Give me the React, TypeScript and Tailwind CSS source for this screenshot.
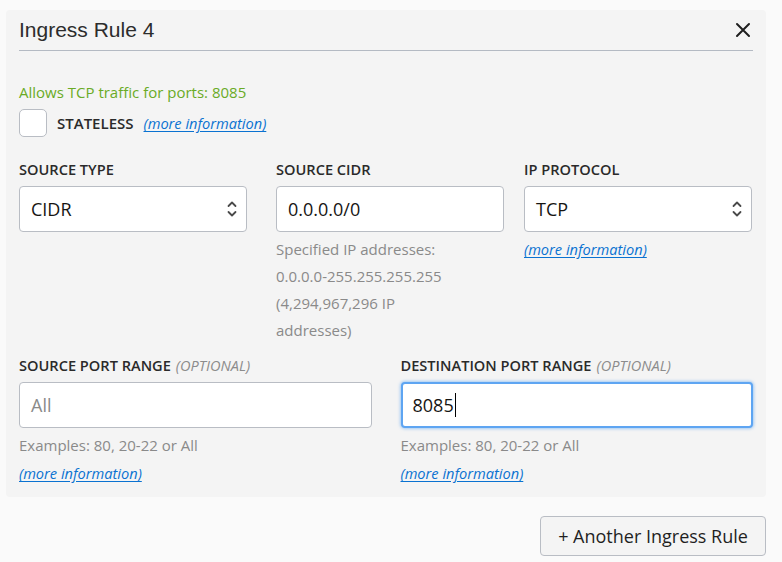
import React from "react";

const sans = { fontFamily: '"Open Sans", "Liberation Sans", sans-serif' };
const helv = { fontFamily: '"Liberation Sans", Arial, sans-serif' };

function MoreInfo() {
  return (
    <a className="text-[14.6px] italic text-[#0a72d1] underline underline-offset-2" style={sans}>
      (more information)
    </a>
  );
}

function Chevrons() {
  return (
    <svg width="10" height="18" viewBox="0 0 10 18" fill="none" stroke="#4a4a4a" strokeWidth="1.8" strokeLinecap="round" strokeLinejoin="round">
      <path d="M1.5 6 L5 2.5 L8.5 6" />
      <path d="M1.5 12 L5 15.5 L8.5 12" />
    </svg>
  );
}

function Label({ text, optional }: { text: string; optional?: boolean }) {
  return (
    <div className="h-[20px] text-[14.6px] leading-[19px] font-semibold text-[#2a2a2a]" style={sans}>
      {text}
      {optional && <span className="ml-[5px] font-normal italic text-[#8c8c8c]">(OPTIONAL)</span>}
    </div>
  );
}

function Select({ value }: { value: string }) {
  return (
    <div className="mt-[6px] h-[46px] flex items-center justify-between rounded-[4px] border border-[#b9bdc4] bg-white pl-[11px] pr-[9px] text-[18px] text-[#161513]" style={sans}>
      <span>{value}</span>
      <Chevrons />
    </div>
  );
}

function TextBox({ value, placeholder }: { value?: string; placeholder?: string }) {
  return (
    <div className="mt-[6px] h-[46px] flex items-center rounded-[4px] border border-[#b9bdc4] bg-white pl-[11px] text-[18px]" style={sans}>
      {value ? <span className="text-[#161513]">{value}</span> : <span className="text-[#8a8a8a]">{placeholder}</span>}
    </div>
  );
}

function Help({ children }: { children: React.ReactNode }) {
  return (
    <div className="text-[15px] leading-[27px] text-[#8a8a8a]" style={sans}>
      {children}
    </div>
  );
}

export default function App() {
  return (
    <div className="w-[782px] h-[562px] bg-[#fafafa] pl-[6px] pt-[10px] overflow-hidden">
      <div className="w-[760px] rounded-[4px] bg-[#f4f4f4] px-[13px] pb-[10px]">
        <div className="h-[41px] flex items-center justify-between border-b border-[#b4bac3]">
          <span className="text-[21px] text-[#2c2c2c]" style={helv}>Ingress Rule 4</span>
          <svg width="16" height="16" viewBox="0 0 16 16" className="mr-[2px]" stroke="#1f1f1f" strokeWidth="2" strokeLinecap="round">
            <path d="M2 2 L14 14 M14 2 L2 14" />
          </svg>
        </div>

        <div className="mt-[31px] text-[15px] leading-[20px] text-[#6aab26]" style={sans}>
          Allows TCP traffic for ports: 8085
        </div>

        <div className="mt-[7px] flex items-center">
          <div className="w-[28px] h-[28px] rounded-[5px] border border-[#b9bdc4] bg-white" />
          <span className="ml-[10px] text-[15px] font-semibold text-[#2a2a2a]" style={sans}>STATELESS</span>
          <span className="ml-[10px]"><MoreInfo /></span>
        </div>

        <div className="mt-[23px] flex">
          <div className="w-[228px]">
            <Label text="SOURCE TYPE" />
            <Select value="CIDR" />
          </div>
          <div className="ml-[29px] w-[228px]">
            <Label text="SOURCE CIDR" />
            <TextBox value="0.0.0.0/0" />
            <div className="mt-[4px]">
              <Help>
                Specified IP addresses:
                <br />
                0.0.0.0-255.255.255.255
                <br />
                (4,294,967,296 IP
                <br />
                addresses)
              </Help>
            </div>
          </div>
          <div className="ml-[20px] w-[228px]">
            <Label text="IP PROTOCOL" />
            <Select value="TCP" />
            <div className="mt-[4px] leading-[27px]"><MoreInfo /></div>
          </div>
        </div>

        <div className="mt-[12px] grid grid-cols-2 gap-x-[29px]">
          <div>
            <Label text="SOURCE PORT RANGE" optional />
            <TextBox placeholder="All" />
            <div className="mt-[4px]">
              <Help>Examples: 80, 20-22 or All</Help>
              <div className="leading-[28px]"><MoreInfo /></div>
            </div>
          </div>
          <div>
            <Label text="DESTINATION PORT RANGE" optional />
            <div className="mt-[6px] h-[46px] flex items-center rounded-[4px] border-2 border-[#5ea5f2] bg-white pl-[10px] text-[18px] shadow-[0_0_3px_1px_rgba(94,165,242,0.55)]" style={sans}>
              <span className="text-[#161513]">8085</span>
              <span className="ml-[1px] w-[1px] h-[24px] bg-black" />
            </div>
            <div className="mt-[4px]">
              <Help>Examples: 80, 20-22 or All</Help>
              <div className="leading-[28px]"><MoreInfo /></div>
            </div>
          </div>
        </div>
      </div>

      <div className="mt-[19px] flex justify-end pr-[16px]">
        <button className="h-[40px] w-[226px] rounded-[4px] border border-[#b9bdc4] bg-[#f4f4f4] text-[18px] text-[#1f1f1f]" style={sans}>
          + Another Ingress Rule
        </button>
      </div>
    </div>
  );
}
